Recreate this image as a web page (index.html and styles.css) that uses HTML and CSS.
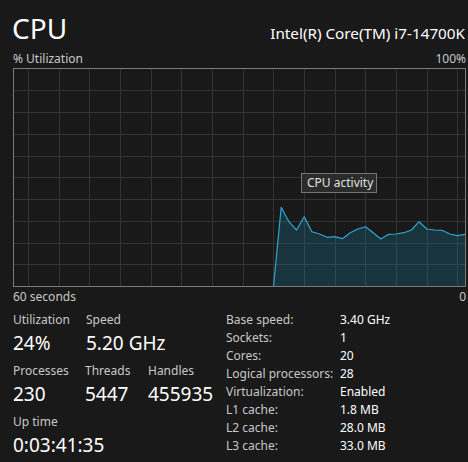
FILE: index.html
```html
<!DOCTYPE html>
<html lang="en">
<head>
<meta charset="utf-8">
<title>CPU</title>
<link rel="stylesheet" href="styles.css">
</head>
<body>
<div class="page">
  <header class="head">
    <h1 class="title">CPU</h1>
    <div class="model">Intel(R) Core(TM) i7-14700K</div>
  </header>
  <div class="axis-top">
    <span>% Utilization</span>
    <span>100%</span>
  </div>
  <div class="graph">
    <svg class="chart" width="453" height="219" viewBox="0 0 453 219" xmlns="http://www.w3.org/2000/svg">
      <g class="grid">
        <path d="M0 22.5H453M0 44.5H453M0 66.5H453M0 88.5H453M0 109.5H453M0 131.5H453M0 153.5H453M0 175.5H453M0 196.5H453"/>
        <path d="M15.5 0V219M46.5 0V219M76.5 0V219M107.5 0V219M138.5 0V219M168.5 0V219M199.5 0V219M230.5 0V219M260.5 0V219M291.5 0V219M322.5 0V219M352.5 0V219M383.5 0V219M414.5 0V219M444.5 0V219"/>
      </g>
      <path class="area" d="M260.5 218.5L268.2 139.3L275.9 153.7L283.5 162L291.2 148.7L298.9 163.7L306.5 166L314.2 169.3L321.9 168.7L329.5 170.7L337.2 164.7L344.8 161L352.5 158.7L360.2 164.7L367.8 171L375.5 166.3L383.2 166L390.8 164.7L398.5 162L406.1 153.7L413.8 161L421.5 162L429.1 162.3L436.8 166L444.4 167.7L452 166.3V218.5Z"/>
      <path class="line" d="M260.5 218.5L268.2 139.3L275.9 153.7L283.5 162L291.2 148.7L298.9 163.7L306.5 166L314.2 169.3L321.9 168.7L329.5 170.7L337.2 164.7L344.8 161L352.5 158.7L360.2 164.7L367.8 171L375.5 166.3L383.2 166L390.8 164.7L398.5 162L406.1 153.7L413.8 161L421.5 162L429.1 162.3L436.8 166L444.4 167.7L452 166.3"/>
      <rect class="frame" x="0.5" y="0.5" width="452" height="218"/>
    </svg>
    <div class="tooltip">CPU activity</div>
  </div>
  <div class="axis-bottom">
    <span>60 seconds</span>
    <span>0</span>
  </div>
  <section class="details">
    <div class="stats">
      <div class="stat-row">
        <div class="stat w73"><div class="label">Utilization</div><div class="value">24%</div></div>
        <div class="stat"><div class="label">Speed</div><div class="value">5.20 GHz</div></div>
      </div>
      <div class="stat-row">
        <div class="stat w72"><div class="label">Processes</div><div class="value">230</div></div>
        <div class="stat w63"><div class="label">Threads</div><div class="value">5447</div></div>
        <div class="stat"><div class="label">Handles</div><div class="value">455935</div></div>
      </div>
      <div class="stat-row">
        <div class="stat"><div class="label">Up time</div><div class="value">0:03:41:35</div></div>
      </div>
    </div>
    <dl class="specs">
      <div class="spec"><dt>Base speed:</dt><dd>3.40 GHz</dd></div>
      <div class="spec"><dt>Sockets:</dt><dd>1</dd></div>
      <div class="spec"><dt>Cores:</dt><dd>20</dd></div>
      <div class="spec"><dt>Logical processors:</dt><dd>28</dd></div>
      <div class="spec"><dt>Virtualization:</dt><dd>Enabled</dd></div>
      <div class="spec"><dt>L1 cache:</dt><dd>1.8 MB</dd></div>
      <div class="spec"><dt>L2 cache:</dt><dd>28.0 MB</dd></div>
      <div class="spec"><dt>L3 cache:</dt><dd>33.0 MB</dd></div>
    </dl>
  </section>
</div>
</body>
</html>
```

FILE: styles.css
```css
* { box-sizing: border-box; }
html, body {
  margin: 0;
  padding: 0;
  background: #191919;
  width: 468px;
  height: 462px;
  overflow: hidden;
}
body {
  font-family: "Segoe UI", "Noto Sans", "Open Sans", sans-serif;
  color: #ffffff;
}
.page {
  padding: 8px 2px 0 13px;
}
.head {
  display: flex;
  justify-content: space-between;
  align-items: baseline;
  height: 41px;
}
.title {
  margin: 0 0 0 -1px;
  font-size: 28px;
  font-weight: 400;
  line-height: 41px;
}
.model {
  font-size: 15.25px;
  line-height: 41px;
  margin-right: 1px;
}
.axis-top, .axis-bottom {
  display: flex;
  justify-content: space-between;
  font-size: 12px;
  color: #c8c8c8;
  line-height: 18px;
}
.axis-top { padding-top: 1px; }
.axis-bottom { line-height: 17px; padding-top: 1px; }
.graph {
  position: relative;
  height: 219px;
}
.chart { display: block; }
.grid path { stroke: #333333; stroke-width: 1; fill: none; }
.area { fill: rgba(30, 160, 205, 0.2); stroke: none; }
.line { fill: none; stroke: #2da6d2; stroke-width: 1.2; stroke-linejoin: round; }
.frame { fill: none; stroke: #7a7a7a; stroke-width: 1; }
.tooltip {
  position: absolute;
  left: 288px;
  top: 105px;
  width: 76px;
  height: 20px;
  background: #2b2b2b;
  border: 1px solid #747474;
  font-size: 12px;
  line-height: 18px;
  color: #e0e0e0;
  padding-left: 5px;
}
.details {
  display: flex;
  margin-top: 7px;
}
.stats {
  width: 213px;
  display: flex;
  flex-direction: column;
  gap: 5px;
}
.stat-row { display: flex; }
.w73 { width: 73px; }
.w72 { width: 72px; }
.w63 { width: 63px; }
.label {
  font-size: 12px;
  line-height: 16px;
  color: #c8c8c8;
}
.value {
  font-size: 19px;
  line-height: 30px;
  color: #ffffff;
}
.specs {
  margin: -1px 0 0 0;
  font-size: 12px;
  line-height: 18px;
}
.spec { display: flex; }
.spec dt { width: 114px; color: #c8c8c8; }
.spec dd { margin: 0; color: #ffffff; }
```
